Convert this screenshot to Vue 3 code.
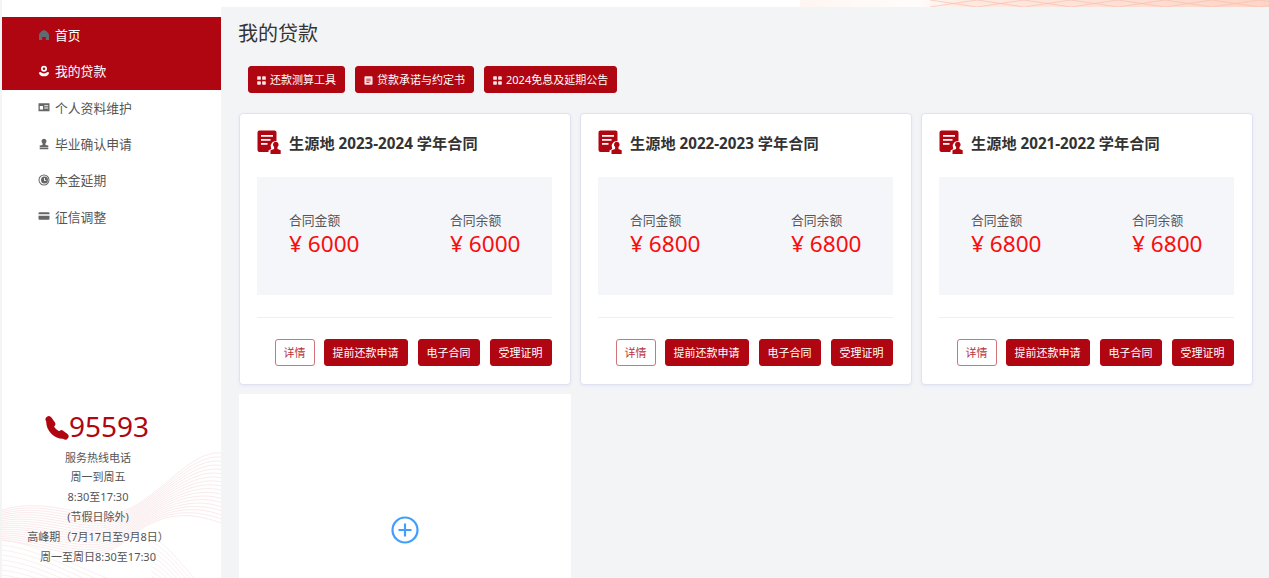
<script setup>
const menus = [
  { name: "首页", icon: "home", active: true },
  { name: "我的贷款", icon: "loan", active: true },
  { name: "个人资料维护", icon: "idcard" },
  { name: "毕业确认申请", icon: "stamp" },
  { name: "本金延期", icon: "clock" },
  { name: "征信调整", icon: "credit" },
];

const tools = [
  { name: "还款测算工具", icon: "grid" },
  { name: "贷款承诺与约定书", icon: "doc" },
  { name: "2024免息及延期公告", icon: "grid" },
];

const contracts = [
  { id: 1, year: "2023-2024", total: 6000, left: 6000 },
  { id: 2, year: "2022-2023", total: 6800, left: 6800 },
  { id: 3, year: "2021-2022", total: 6800, left: 6800 },
];

const hotline = [
  "服务热线电话",
  "周一到周五",
  "8:30至17:30",
  "(节假日除外)",
  "高峰期（7月17日至9月8日）",
  "周一至周日8:30至17:30",
];

// decorative line bands behind the hotline block
const waves = Array.from({ length: 18 }, (_, i) => {
  const k = i / 17;
  return `M0 ${70 + k * 30} C50 ${55 + k * 50} 90 ${85 + k * 45} 125 ${70 + k * 30} S190 ${10 + k * 62} 220 ${13 + k * 70}`;
});

const lowerWaves = Array.from({ length: 10 }, (_, i) => {
  const k = i * 5;
  return `M0 ${100 + k} C40 ${105 + k} 70 ${125 + k} 110 ${140 + k}M150 ${96 + k} C170 ${108 + k} 180 ${125 + k} 195 ${140 + k}`;
});

const crossLines = Array.from({ length: 8 }, (_, i) => 130 + i * 47);
</script>

<template>
  <div class="page">
    <aside class="sidebar">
      <svg class="side-waves" viewBox="0 0 220 138" preserveAspectRatio="none" aria-hidden="true">
        <path v-for="(d, i) in waves" :key="i" :d="d" fill="none" stroke="#f3ccd3" stroke-width="0.5" />
        <path v-for="(d, i) in lowerWaves" :key="'l' + i" :d="d" fill="none" stroke="#f6d8dd" stroke-width="0.5" />
      </svg>
      <nav class="menu">
        <a v-for="m in menus" :key="m.name" class="menu-item" :class="{ active: m.active }">
          <svg class="menu-icon" viewBox="0 0 12 12" aria-hidden="true">
            <path v-if="m.icon === 'home'" d="M6 1C8 1.500 11 4 11 6v5H7.800V8H4.200v3H1V6C1 4 4 1.500 6 1z" />
            <g v-else-if="m.icon === 'loan'">
              <path fill-rule="evenodd" d="M6 .8a3 3 0 1 1 0 6 3 3 0 0 1 0-6zm0 1.700a1.300 1.300 0 1 0 0 2.600 1.300 1.300 0 0 0 0-2.600z" />
              <path d="M.8 7.400 3 7c.6 1 1.600 1.400 3 1.400S8.400 8 9 7l2.200.4C10.800 9.900 8.600 11.300 6 11.300S1.200 9.900.8 7.400z" />
            </g>
            <path v-else-if="m.icon === 'idcard'" fill-rule="evenodd" d="M.5 2.200h11v8H.5zM1.800 5v3.500h3.200V5zm4.500-.8v1h3.900v-1zm0 2.200v1h3.900v-1z" />
            <path v-else-if="m.icon === 'stamp'" d="M6 .8a2.500 2.500 0 0 1 1.500 4.500V7l2.800.6v1.900H1.700V7.600L4.500 7V5.300A2.500 2.500 0 0 1 6 .8zM1.700 10h8.600v1.200H1.700z" />
            <path v-else-if="m.icon === 'clock'" fill-rule="evenodd" d="M6 .5a5.500 5.500 0 1 1 0 11 5.500 5.500 0 0 1 0-11zm0 1a4.500 4.500 0 1 0 0 9 4.500 4.500 0 0 0 0-9zM6.500 2.500a3.500 3.500 0 1 1 0 7 3.500 3.500 0 0 1 0-7zM6 4v2.800h2.300v-.9H6.900V4z" />
            <path v-else fill-rule="evenodd" d="M1.500 2.200h9a1 1 0 0 1 1 1V4.300H.5V3.200a1 1 0 0 1 1-1zM.5 5.700h11v3a1 1 0 0 1-1 1h-9a1 1 0 0 1-1-1z" />
          </svg>
          <span>{{ m.name }}</span>
        </a>
      </nav>
      <div class="hotline">
        <div class="hotline-no">
          <svg class="phone" viewBox="0 0 24 24" aria-hidden="true">
            <path d="M4.500 6C4.500 13 11 19.500 18 19.500" fill="none" stroke="#b00611" stroke-width="6.500" />
            <path d="M3.800 3.500 7 8M16.500 17.500 20.300 20.300" fill="none" stroke="#b00611" stroke-width="6.500" stroke-linecap="round" />
          </svg>
          <span>95593</span>
        </div>
        <p v-for="line in hotline" :key="line">{{ line }}</p>
      </div>
    </aside>

    <div class="body">
      <div class="topbar">
        <svg class="top-pattern" viewBox="0 0 469 7" preserveAspectRatio="none" aria-hidden="true">
          <defs>
            <linearGradient id="topFade" x1="0" x2="1" y1="0" y2="0">
              <stop offset="0" stop-color="#fde4da" stop-opacity="0.35" />
              <stop offset="0.25" stop-color="#fde4da" stop-opacity="0.1" />
              <stop offset="0.35" stop-color="#fde4da" stop-opacity="0.8" />
              <stop offset="1" stop-color="#fdd5c7" />
            </linearGradient>
          </defs>
          <rect x="0" width="469" height="7" fill="url(#topFade)" />
          <g stroke="#f9bfae" stroke-width="0.7">
            <path v-for="x in crossLines" :key="x" :d="`M${x} 0l47 7M${x + 47} 0l-47 7`" />
          </g>
        </svg>
      </div>
      <main class="main">
        <h1 class="title">我的贷款</h1>
        <div class="toolbar">
          <button v-for="t in tools" :key="t.name" class="btn tool-btn" type="button">
            <svg class="tool-icon" viewBox="0 0 10 10" aria-hidden="true">
              <path
                v-if="t.icon === 'grid'"
                fill-rule="evenodd"
                d="M1 .3h2.500a.8.800 0 0 1 .8.800v2.400a.8.800 0 0 1-.8.800H1a.8.800 0 0 1-.8-.8V1.100A.8.800 0 0 1 1 .3zm5.500 0H9a.8.800 0 0 1 .8.800v2.400a.8.800 0 0 1-.8.800H6.500a.8.800 0 0 1-.8-.8V1.100a.8.800 0 0 1 .8-.8zM1 5.700h2.500a.8.800 0 0 1 .8.800v2.400a.8.800 0 0 1-.8.800H1a.8.800 0 0 1-.8-.8V6.500a.8.800 0 0 1 .8-.8zm5.500 0H9a.8.800 0 0 1 .8.800v2.400a.8.800 0 0 1-.8.800H6.500a.8.800 0 0 1-.8-.8V6.500a.8.800 0 0 1 .8-.8z"
              />
              <path v-else fill-rule="evenodd" d="M1.500.300h7a1 1 0 0 1 1 1v7.400a1 1 0 0 1-1 1h-7a1 1 0 0 1-1-1V1.300a1 1 0 0 1 1-1zM2.500 3v.9h5V3zm0 2v.9h5V5zm0 2v.9h3.500V7z" />
            </svg>
            {{ t.name }}
          </button>
        </div>

        <div class="cards">
          <section v-for="c in contracts" :key="c.id" class="card">
            <header class="card-head">
              <svg class="contract-icon" viewBox="0 0 24 24" aria-hidden="true">
                <path d="M2.500 .5h15a2 2 0 0 1 2 2v8.600a5 5 0 0 0-5.600 5.900l.3 2.100-2.700 1.300v1.600H2.500a2 2 0 0 1-2-2V2.500a2 2 0 0 1 2-2z" />
                <path class="lines" d="M4 5h12v1.800H4zM4 9h9.500v1.800H4zM4 13h6.500v1.800H4z" />
                <path d="M18.800 11.800a2.900 2.900 0 0 1 1.700 5.200v2l3.200 1.200V24H13.500v-3.800l3.600-1.200v-2a2.900 2.900 0 0 1 1.700-5.200z" />
              </svg>
              <h2>生源地 {{ c.year }} 学年合同</h2>
            </header>
            <div class="stats">
              <div class="stat">
                <span class="stat-label">合同金额</span>
                <span class="stat-value">¥ {{ c.total }}</span>
              </div>
              <div class="stat">
                <span class="stat-label">合同余额</span>
                <span class="stat-value">¥ {{ c.left }}</span>
              </div>
            </div>
            <footer class="card-foot">
              <button class="btn outline" type="button">详情</button>
              <button class="btn" type="button">提前还款申请</button>
              <button class="btn" type="button">电子合同</button>
              <button class="btn" type="button">受理证明</button>
            </footer>
          </section>
          <section class="add-card">
            <svg class="add-icon" viewBox="0 0 28 28" aria-hidden="true">
              <circle cx="14" cy="14" r="12.500" fill="none" stroke="#409eff" stroke-width="2.200" />
              <path d="M14 7.500v13M7.500 14h13" stroke="#409eff" stroke-width="2.200" fill="none" />
            </svg>
          </section>
        </div>
      </main>
    </div>
  </div>
</template>

<style>
html,
body {
  margin: 0;
  overflow: hidden;
}
</style>

<style scoped>
.page {
  display: flex;
  height: 578px;
  overflow: hidden;
  padding-left: 2px;
  box-sizing: border-box;
  background: #f3f4f6;
  font-family: "Noto Sans", "Noto Sans CJK SC", sans-serif;
  color: #4b4b4b;
}

.sidebar {
  position: relative;
  display: flex;
  flex-direction: column;
  justify-content: space-between;
  width: 219px;
  flex-shrink: 0;
  padding-top: 17px;
  box-sizing: border-box;
  background: #fff;
}

.side-waves {
  position: absolute;
  left: 0;
  bottom: 0;
  width: 219px;
  height: 138px;
  opacity: 0.8;
}

.menu {
  display: flex;
  flex-direction: column;
}

.menu-item {
  display: flex;
  align-items: center;
  gap: 5px;
  height: 36.300px;
  padding-left: 36px;
  padding-bottom: 1px;
  box-sizing: border-box;
  font-size: 12.800px;
  color: #555;
}

.menu-item.active {
  background: #b00611;
  color: #fff;
}

.menu-icon {
  width: 12px;
  height: 12px;
  fill: #666;
  flex-shrink: 0;
}

.menu-item.active .menu-icon {
  fill: #fff;
}

.menu-item:first-child .menu-icon {
  fill: #5f6b70;
}

.hotline {
  position: relative;
  padding: 0 27px 11px 0;
  text-align: center;
  font-size: 11px;
  color: #555;
}

.hotline p {
  margin: 0;
  line-height: 19.900px;
  white-space: nowrap;
}

.hotline-no {
  display: flex;
  align-items: center;
  justify-content: center;
  height: 36px;
  margin-bottom: 4px;
  padding-right: 2px;
  font-size: 28px;
  line-height: 36px;
  color: #b00611;
}

.phone {
  width: 24px;
  height: 24px;
  margin-top: 5px;
}

.body {
  display: flex;
  flex-direction: column;
  flex: 1;
  min-width: 0;
}

.topbar {
  position: relative;
  height: 7px;
  flex-shrink: 0;
  background: #fff;
}

.top-pattern {
  position: absolute;
  top: 0;
  right: 0;
  width: 469px;
  height: 7px;
}

.main {
  padding: 12px 16px 0 17px;
}

.title {
  margin: 0;
  font-size: 20px;
  font-weight: 400;
  line-height: 30px;
  color: #333;
}

.toolbar {
  display: flex;
  gap: 10px;
  margin: 17px 0 20px 10px;
}

.btn {
  height: 27px;
  padding: 0 8px;
  border: 1px solid #b00611;
  border-radius: 3px;
  background: #b00611;
  color: #fff;
  font-family: inherit;
  font-size: 11px;
  line-height: 1;
  white-space: nowrap;
  cursor: pointer;
}

.tool-btn {
  display: inline-flex;
  align-items: center;
  gap: 4px;
}

.tool-icon {
  width: 9px;
  height: 9px;
  margin-top: 1px;
  fill: #fff;
  opacity: 0.9;
}

.cards {
  display: grid;
  grid-template-columns: repeat(3, 331.500px);
  column-gap: 9.500px;
  row-gap: 9px;
  margin-left: 1px;
}

.card {
  height: 272px;
  padding: 13px 17.500px 0 17px;
  box-sizing: border-box;
  border: 1px solid #dfe3f1;
  border-radius: 4px;
  background: #fff;
  box-shadow: 0 1px 3px rgba(200, 208, 230, 0.35);
}

.card-head {
  display: flex;
  align-items: center;
  gap: 8px;
  height: 30px;
}

.contract-icon {
  width: 24px;
  height: 24px;
  fill: #b00611;
  flex-shrink: 0;
}

.contract-icon .lines {
  fill: #fff;
}

.card-head h2 {
  margin: 0;
  font-size: 15.200px;
  font-weight: 700;
  color: #333;
}

.stats {
  display: grid;
  grid-template-columns: 161px 1fr;
  align-content: center;
  height: 118px;
  margin-top: 20px;
  padding: 0 0 2px 32px;
  box-sizing: border-box;
  background: #f5f6fa;
}

.stat {
  display: flex;
  flex-direction: column;
}

.stat-label {
  margin-bottom: 0.500px;
  font-size: 12.800px;
  line-height: 18px;
  color: #555;
}

.stat-value {
  font-size: 22.600px;
  line-height: 30px;
  color: #f90d0d;
}

.card-foot {
  display: flex;
  justify-content: flex-end;
  gap: 10px;
  margin-top: 22px;
  padding: 21px 0.500px 0 0;
  border-top: 1px solid #eeeff3;
}

.outline {
  margin-right: -1px;
  background: #fff;
  border-color: #d0737a;
  color: #b8323c;
}

.add-card {
  display: flex;
  align-items: center;
  justify-content: center;
  height: 272px;
  background: #fff;
}

.add-icon {
  width: 28px;
  height: 28px;
}
</style>
